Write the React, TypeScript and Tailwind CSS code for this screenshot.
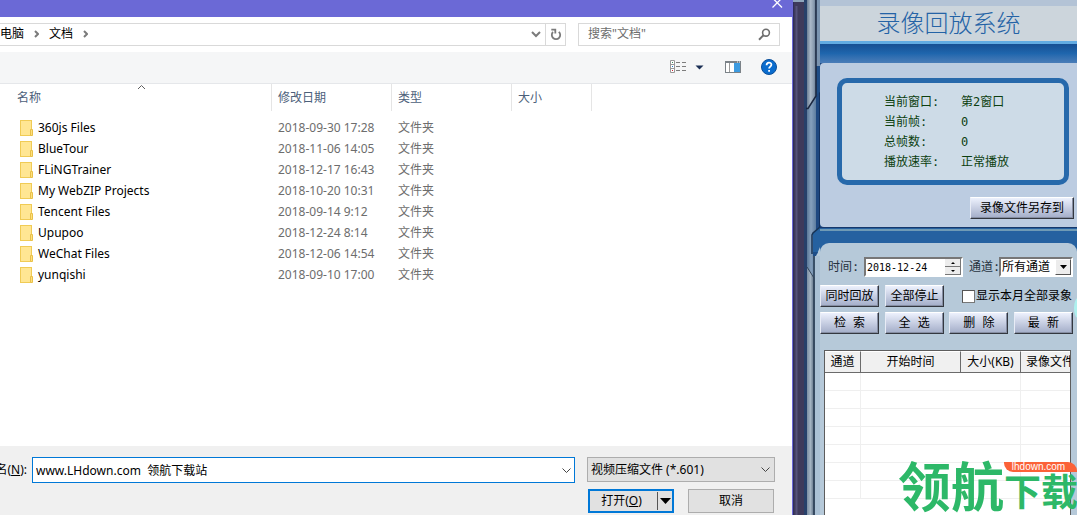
import type { ReactNode } from "react";

const UI_FONT = "font-['Noto_Sans','Noto_Sans_CJK_SC',sans-serif]";
const SKIN_FONT = "font-['DejaVu_Sans_Mono','Noto_Sans_CJK_SC',monospace]";

const files = [
  ["360js Files", "2018-09-30 17:28"],
  ["BlueTour", "2018-11-06 14:05"],
  ["FLiNGTrainer", "2018-12-17 16:43"],
  ["My WebZIP Projects", "2018-10-20 10:31"],
  ["Tencent Files", "2018-09-14 9:12"],
  ["Upupoo", "2018-12-24 8:14"],
  ["WeChat Files", "2018-12-06 14:54"],
  ["yunqishi", "2018-09-10 17:00"],
];

const info = [
  ["当前窗口:", "第2窗口"],
  ["当前帧:", "0"],
  ["总帧数:", "0"],
  ["播放速率:", "正常播放"],
];

function FolderIcon() {
  return (
    <svg width="14" height="16" viewBox="0 0 14 16" className="shrink-0" aria-hidden="true">
      <rect x="0.5" y="0.5" width="11" height="15" fill="#ffe693" stroke="#f0cb55" />
      <path d="M10.5 15.5v-6h2v6z" fill="#ffe07c" stroke="#e8c04a" />
    </svg>
  );
}

function Chevron({ className, d, w, h, sw = 1 }: { className: string; d: string; w: number; h: number; sw?: number }) {
  return (
    <svg width={w} height={h} viewBox={`0 0 ${w} ${h}`} className={className} fill="none" stroke="currentColor" strokeWidth={sw} aria-hidden="true">
      <path d={d} />
    </svg>
  );
}

function AddressRow() {
  return (
    <div className="flex h-[35px] items-center bg-white pr-3 pb-px text-[12px]">
      <div className="flex h-[23px] flex-1 items-center border-y border-r border-[#d9d9d9]">
        <nav className="flex flex-1 items-center text-black">
          <a href="#pc" className="w-[34px]">电脑</a>
          <Chevron className="text-[#7b7b7b]" w={5} h={8} sw={2} d="M1 1l3 3-3 3" />
          <a href="#docs" className="ml-[10px] w-[34px]">文档</a>
          <Chevron className="text-[#7b7b7b]" w={5} h={8} sw={2} d="M1 1l3 3-3 3" />
        </nav>
        <button aria-label="以前的位置" className="flex h-full w-[19px] items-center justify-center text-[#7b7b7b]">
          <Chevron className="" w={10} h={7} sw={2} d="M1 1l4 4 4-4" />
        </button>
        <button aria-label="刷新" className="flex h-full w-5 items-center justify-center border-l border-[#d9d9d9] text-[#7b7b7b]">
          <svg width="12" height="13" viewBox="0 0 12 13" fill="none" stroke="currentColor" strokeWidth="1.8" aria-hidden="true">
            <path d="M8.800 3.800A4.200 4.200 0 1 1 3 4" />
            <path d="M1.300 1.600h4v4" />
          </svg>
        </button>
      </div>
      <div className="ml-3 flex h-[23px] w-[202px] items-center border border-[#d9d9d9] pr-2 pl-[9px]">
        <input aria-label="搜索" placeholder={'搜索"文档"'} className="min-w-0 flex-1 bg-transparent outline-none placeholder:text-[#6d6d6d]" />
        <svg width="13" height="13" viewBox="0 0 13 13" fill="none" stroke="#6e6e6e" aria-hidden="true">
          <circle cx="8" cy="4.7" r="3.4" strokeWidth="1.6" />
          <path d="M5.500 7.200L1 11.800" strokeWidth="2" />
        </svg>
      </div>
    </div>
  );
}

function Toolbar() {
  return (
    <div className="flex h-8 items-center justify-end border-b border-[#e5e7ea] bg-[#f5f6f7] pr-[15px] pb-px">
      <button aria-label="更改视图">
        <svg width="17" height="14" viewBox="0 0 17 14" aria-hidden="true">
          <path d="M0.5 0.5h4v12h-4zM0.5 4.5h4M0.5 8.5h4" fill="#fff" stroke="#999" />
          <path d="M6 2.500h4M12 2.500h4M6 6.500h4M12 6.500h4M6 10.500h4M12 10.500h4" stroke="#7d7d7d" />
          <rect x="2" y="2" width="1" height="1" fill="#3a8a5a" />
          <rect x="2" y="6" width="1" height="1" fill="#1979ca" />
          <rect x="2" y="10" width="1" height="1" fill="#d02030" />
        </svg>
      </button>
      <button aria-label="更多选项" className="ml-2">
        <svg width="9" height="5" viewBox="0 0 9 5" aria-hidden="true"><path d="M0.500 0.500h8L4.500 4.500z" fill="#1b2f55" /></svg>
      </button>
      <button aria-label="预览窗格" className="ml-[21px]">
        <svg width="16" height="12" viewBox="0 0 16 12" aria-hidden="true">
          <rect x="0.5" y="0.5" width="15" height="11" fill="#fff" stroke="#7b8288" />
          <path d="M0 1h16" stroke="#7b8288" strokeWidth="2" />
          <path d="M4.500 2v9" stroke="#9a9a9a" />
          <rect x="9" y="2" width="6" height="9" fill="#3d9be0" />
          <path d="M12 1h1M14 1h1" stroke="#fff" />
        </svg>
      </button>
      <button aria-label="帮助" className="ml-5">
        <svg width="16" height="16" viewBox="0 0 16 16" aria-hidden="true">
          <circle cx="8" cy="8" r="7.500" fill="#0a6cce" stroke="#0a4f9a" />
          <path d="M5.600 6.200c0-3.400 4.800-3.200 4.800-.5 0 1.900-2.300 1.900-2.300 3.900M8.100 11v1.800" fill="none" stroke="#fff" strokeWidth="1.800" />
        </svg>
      </button>
    </div>
  );
}

function FileList() {
  const head = "h-[27px] border-r border-[#e5e5e5] pl-[6px] text-left font-normal text-[#4c607a]";
  return (
    <div className="relative flex-1 bg-white text-[12px]">
      <Chevron className="absolute top-0 left-[137px] text-[#5f5f5f]" w={9} h={6} d="M1 5l3.500-3.500L8 5" />
      <table className="w-[592px] table-fixed border-separate border-spacing-0">
        <colgroup>
          <col className="w-[272px]" />
          <col className="w-[120px]" />
          <col className="w-[120px]" />
          <col className="w-[80px]" />
        </colgroup>
        <thead>
          <tr>
            <th className="h-[27px] border-r border-[#e5e5e5] pl-[17px] text-left font-normal text-[#4c607a]">名称</th>
            <th className={head}>修改日期</th>
            <th className={head}>类型</th>
            <th className={head}>大小</th>
          </tr>
        </thead>
        <tbody>
          <tr aria-hidden="true"><td className="h-[6px] p-0" /></tr>
          {files.map(([name, date]) => (
            <tr key={name} className="text-[#6d6d6d]">
              <td className="h-[21px] p-0 pl-5 text-black">
                <span className="flex items-center gap-1 leading-5"><FolderIcon />{name}</span>
              </td>
              <td className="p-0 pl-[6px]">{date}</td>
              <td className="p-0 pl-[6px]">文件夹</td>
              <td />
            </tr>
          ))}
        </tbody>
      </table>
    </div>
  );
}

function DialogFooter() {
  return (
    <div className="flex h-[69px] items-start bg-[#f0f0f0] pr-[17px] pt-[11px] text-[12px] text-black">
      <label htmlFor="filename" className="flex h-[26px] w-8 items-center justify-end overflow-hidden pr-[5px] whitespace-nowrap">
        文件名(<u>N</u>):
      </label>
      <div className="flex h-[26px] flex-1 items-center border border-[#0078d7] bg-white px-[3px] pt-px">
        <input id="filename" defaultValue="www.LHdown.com  领航下载站" className="min-w-0 flex-1 whitespace-pre outline-none" />
        <Chevron className="text-[#444]" w={9} h={6} d="M.5 .5l4 4 4-4" />
      </div>
      <div className="ml-3 flex w-[188px] flex-col gap-[6px]">
        <div className="relative h-[26px]">
          <select aria-label="文件类型" className="h-[25px] w-full appearance-none border border-[#adadad] bg-[#e1e1e1] pl-[3px]">
            <option>视频压缩文件 (*.601)</option>
          </select>
          <Chevron className="pointer-events-none absolute top-[10px] right-[5px] text-[#444]" w={9} h={6} d="M.5 .5l4 4 4-4" />
        </div>
        <div className="flex gap-[14px] pl-px">
          <div className="flex h-6 w-[86px] border-2 border-[#0078d7] bg-[#e1e1e1]">
            <button className="flex-1 pr-1">打开(<u>O</u>)</button>
            <button aria-label="打开选项" className="my-px flex w-[15px] items-center justify-center border-l border-[#555]">
              <svg width="11" height="6" viewBox="0 0 11 6" aria-hidden="true"><path d="M0 0h11L5.500 6z" /></svg>
            </button>
          </div>
          <button className="h-6 w-[86px] border border-[#adadad] bg-[#e1e1e1]">取消</button>
        </div>
      </div>
    </div>
  );
}

function OpenDialog() {
  return (
    <section className={`flex min-w-0 flex-1 flex-col border-r border-[#6b69d6] ${UI_FONT}`}>
      <div className="flex h-[17px] items-start justify-end bg-[#6b69d6] pr-[9px]">
        <button aria-label="关闭">
          <svg width="12" height="9" viewBox="0 0 12 9" className="block" fill="none" stroke="#fff" strokeWidth="1.300" aria-hidden="true">
            <path d="M1.500 -2l9.500 9.500M11 -2l-9.500 9.500" />
          </svg>
        </button>
      </div>
      <AddressRow />
      <Toolbar />
      <FileList />
      <DialogFooter />
    </section>
  );
}

function FrameEdge() {
  return (
    <svg className="w-[27px] shrink-0 self-stretch" aria-hidden="true">
      <defs>
        <linearGradient id="pipe">
          <stop offset="0" stopColor="#6d7f95" />
          <stop offset="0.4" stopColor="#aab8c8" />
          <stop offset="0.8" stopColor="#8496ab" />
          <stop offset="1" stopColor="#55677f" />
        </linearGradient>
        <linearGradient id="rail">
          <stop offset="0" stopColor="#5b7897" />
          <stop offset="0.4" stopColor="#86a0bd" />
          <stop offset="1" stopColor="#557599" />
        </linearGradient>
        <linearGradient id="tube">
          <stop offset="0" stopColor="#7d8fa3" />
          <stop offset="0.5" stopColor="#a3b3c2" />
          <stop offset="1" stopColor="#5d6f84" />
        </linearGradient>
      </defs>
      <rect width="27" height="100%" fill="#3e3a5b" />
      <path d="M.5 0v2000" stroke="#2f2e5c" />
      <path d="M3.500 6v2000" stroke="#55527a" strokeWidth="2" />
      <path d="M0 1h12" stroke="#8fa5bd" strokeWidth="2" />
      <rect x="11" width="3" height="100%" fill="#27406a" />
      <rect x="14" width="10" height="100%" fill="url(#rail)" />
      <rect x="23" width="4" height="100%" fill="#1f4880" />
      <path d="M26.500 66v2000" stroke="#12305f" />
      <rect x="23" width="4" height="66" fill="#7b94b0" />
      <path d="M22 66h5v26l-5 4z" fill="#1f4d86" />
      <path d="M14 0h9v96l-8 13h-1z" fill="url(#pipe)" />
      <path d="M23 0v96l-8 12.500h-2" fill="none" stroke="#1b2740" strokeWidth="1.500" />
      <path d="M27 227l-7 6v21h7z" fill="#2561a0" />
      <path d="M27 227l-7 6-1 2v19" fill="none" stroke="#173355" strokeWidth="1.500" />
      <path d="M27 247l-3 7h-4l1 2h6z" fill="#b6c9d9" />
      <path d="M20 252h5l-2 4h-3z" fill="#1d4d88" />
      <path d="M14 267l7 11v2000h-7z" fill="url(#tube)" />
      <path d="M20 256h2v2000h-2z" fill="#3a5069" />
      <path d="M22 256h5v2000h-5z" fill="#abc1d5" />
      <path d="M14 267l7 11v2000" fill="none" stroke="#34455a" />
    </svg>
  );
}

function SkinButton({ children, className }: { children: ReactNode; className: string }) {
  return (
    <button
      className={`h-[22px] border-t border-l border-r border-b border-t-white border-r-[#33373f] border-b-[#33373f] border-l-[#e8ecf6] bg-linear-to-b from-[#edf1fd] to-[#a3adc8] text-center leading-5 whitespace-pre text-black shadow-[inset_-1px_-1px_0_#868ea3] ${className}`}
    >
      {children}
    </button>
  );
}

function StatusPanel() {
  return (
    <div className="flex flex-col">
      <header className="h-[44px] border-t-[6px] border-b-[3px] border-t-[#b3c3d6] border-b-[#62abe2] bg-[#ccd5dc] text-center">
        <h1 className="font-['Noto_Sans_CJK_SC',sans-serif] text-[24px] leading-[31px] font-light text-[#2463a6]">录像回放系统</h1>
      </header>
      <div className="flex flex-col bg-[#1f4880]">
        <div className="h-[19px] bg-linear-to-b from-[#174f93] via-[#1f66ad] to-[#4a7db8]" />
        <div className="flex h-[164px] flex-col rounded-l-[4px] bg-[#bccce1] pt-[15px] pr-[3px] pl-[17px]">
          <dl className="mr-[5px] flex h-[107px] flex-col rounded-[10px] border-[5px] border-[#2769ab] bg-[#cddbe7] pt-[9px] pl-[42px] text-[#0c3f10]">
            {info.map(([k, v]) => (
              <div key={k} className="flex leading-5">
                <dt className="w-[77px]">{k}</dt>
                <dd>{v}</dd>
              </div>
            ))}
          </dl>
          <SkinButton className="mt-3 w-[104px] self-end">录像文件另存到</SkinButton>
        </div>
      </div>
      <div className="h-[16px] border-t border-[#16386b] bg-[#2561a0] pt-px">
        <div className="h-[2px] bg-[#6f9ab5]" />
      </div>
    </div>
  );
}

function SearchPanel() {
  const th = "h-[22px] border-t border-r border-b border-t-white border-r-[#6b6b6b] border-b-[#6b6b6b] bg-[#f0f0f0] p-0 text-center font-normal whitespace-nowrap";
  return (
    <div className="flex flex-1 flex-col bg-[#2561a0]">
      <div className="flex flex-1 flex-col rounded-t-[9px] bg-[#b6c9d9] pt-[14px] text-black">
        <div className="flex h-5 items-center">
          <label htmlFor="date" className="w-[44px] pl-2 text-[#26323e]">时间:</label>
          <div className="flex h-5 w-[99px] border-2 border-t-[#777] border-r-white border-b-white border-l-[#777] bg-white">
            <input id="date" defaultValue="2018-12-24" className="min-w-0 flex-1 bg-white pl-px text-[10px] outline-none" />
            <div className="flex w-4 flex-col">
              <button aria-label="增加" className="flex h-2 items-center justify-center border-r border-b border-[#777] bg-[#ececec]">
                <svg width="4" height="2" viewBox="0 0 4 2" aria-hidden="true"><path d="M2 0l2 2H0z" /></svg>
              </button>
              <button aria-label="减少" className="flex h-2 items-center justify-center border-r border-b border-[#777] bg-[#ececec]">
                <svg width="4" height="2" viewBox="0 0 4 2" aria-hidden="true"><path d="M0 0h4L2 2z" /></svg>
              </button>
            </div>
          </div>
          <label htmlFor="channel" className="w-9 pl-[6px] whitespace-nowrap text-[#26323e]">通道:</label>
          <div className="relative h-5 w-[74px]">
            <select id="channel" className="h-5 w-full appearance-none border-2 border-t-[#777] border-r-white border-b-white border-l-[#777] bg-white pl-px leading-4">
              <option>所有通道</option>
            </select>
            <span className="pointer-events-none absolute top-[2px] right-[2px] flex h-4 w-4 items-center justify-center border-t border-r border-b border-l border-t-white border-r-[#555] border-b-[#555] border-l-white bg-[#ececec]">
              <svg width="7" height="4" viewBox="0 0 7 4" aria-hidden="true"><path d="M0 0h7L3.500 4z" /></svg>
            </span>
          </div>
        </div>
        <div className="mt-2 flex items-center">
          <SkinButton className="w-[59px]">同时回放</SkinButton>
          <SkinButton className="ml-[6px] w-[59px]">全部停止</SkinButton>
          <label className="ml-[18px] flex items-center gap-px whitespace-nowrap">
            <input type="checkbox" className="size-[13px] appearance-none border border-t-[#555] border-r-[#777] border-b-[#777] border-l-[#555] bg-white" />
            显示本月全部录象
          </label>
        </div>
        <div className="mt-[5px] flex justify-between pr-1">
          <SkinButton className="w-[59px]">检 索</SkinButton>
          <SkinButton className="w-[59px]">全 选</SkinButton>
          <SkinButton className="w-[59px]">删 除</SkinButton>
          <SkinButton className="w-[59px]">最 新</SkinButton>
        </div>
        <div className={`mt-4 mr-[6px] ml-1 flex-1 overflow-hidden border-x border-t border-[#5d5d5d] bg-white ${UI_FONT}`}>
          <table className="w-[276px] table-fixed border-separate border-spacing-0">
            <colgroup>
              <col className="w-9" />
              <col className="w-[100px]" />
              <col className="w-[60px]" />
              <col className="w-[80px]" />
            </colgroup>
            <thead>
              <tr>
                <th className={th}>通道</th>
                <th className={th}>开始时间</th>
                <th className={th}>大小(KB)</th>
                <th className="h-[22px] border-t border-b border-t-white border-b-[#6b6b6b] bg-[#f0f0f0] p-0 pl-[5px] text-left font-normal whitespace-nowrap">录像文件</th>
              </tr>
            </thead>
            <tbody>
              {[0, 1, 2, 3, 4, 5, 6].map((r) => (
                <tr key={r}>
                  <td className="h-[18px] border-r border-b border-[#efefef] p-0" />
                  <td className="border-b border-[#efefef] p-0" />
                  <td className="border-r border-b border-[#efefef] p-0" />
                  <td className="border-b border-[#efefef] p-0" />
                </tr>
              ))}
            </tbody>
          </table>
        </div>
      </div>
    </div>
  );
}

function Watermark() {
  return (
    <div className="pointer-events-none absolute right-0 bottom-[6px] flex items-end font-['Noto_Sans_CJK_SC',sans-serif] font-bold text-[#2db868]">
      <span className="text-[53px] leading-[50px]">领航</span>
      <div className="flex w-[73px] flex-col">
        <span className="h-[10px] rounded-tr-[9px] rounded-bl-[9px] bg-[#fb6238] pr-1 text-center font-['Liberation_Sans',sans-serif] text-[10px] leading-[10px] font-normal text-white">lhdown.com</span>
        <span className="text-[37px] leading-[37px] whitespace-nowrap">下载</span>
      </div>
    </div>
  );
}

export default function App() {
  return (
    <main className="flex min-h-screen overflow-hidden">
      <OpenDialog />
      <aside className={`relative flex w-[284px] shrink-0 overflow-hidden text-[12px] ${SKIN_FONT}`}>
        <FrameEdge />
        <div className="flex min-w-0 flex-1 flex-col">
          <StatusPanel />
          <SearchPanel />
        </div>
        <svg width="3" height="22" viewBox="0 0 3 22" className="absolute top-[297px] right-0" aria-hidden="true">
          <ellipse cx="4" cy="11" rx="4" ry="10" fill="#aef0ee" />
        </svg>
        <Watermark />
      </aside>
    </main>
  );
}
